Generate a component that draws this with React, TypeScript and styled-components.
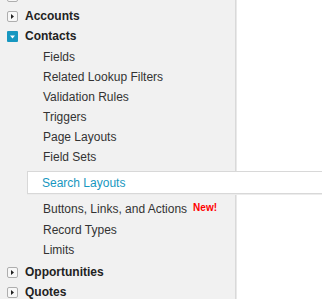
import React from 'react';
import styled, { createGlobalStyle } from 'styled-components';

const GlobalStyle = createGlobalStyle`
  html,
  body {
    margin: 0;
    height: 100%;
    overflow: hidden;
    background: #fff;
    font-family: 'Liberation Sans', Arial, sans-serif;
  }
`;

const Sidebar = styled.nav`
  display: flow-root;
  width: 235px;
  height: 100vh;
  background: #f1f1f1;
  border-right: 1px solid #d9d9d9;
  box-shadow: 1px 0 0 #e9e9e9;
`;

const Tree = styled.ul`
  list-style: none;
  margin: -14px 0 0;
  padding: 0;
`;

const Node = styled.li`
  margin: 0;
  padding: 0;
`;

const NodeHeader = styled.div`
  display: flex;
  align-items: center;
  gap: 7px;
  height: 20px;
  padding-left: 7px;
  font-size: 12px;
  font-weight: bold;
  color: #222;
  white-space: nowrap;
`;

const ToggleIcon = styled.svg`
  flex: none;
  display: block;
  width: 11px;
  height: 11px;
`;

const SubList = styled.ul`
  list-style: none;
  margin: 0;
  padding: 1px 0 2px 27px;
`;

const SubItem = styled.li<{ $selected?: boolean; $tall?: boolean }>`
  line-height: 20px;
  font-size: 12px;
  white-space: nowrap;
  color: ${(p) => (p.$selected ? '#1797c0' : '#333')};
  padding: ${(p) => (p.$selected ? '1px 0 0 14px' : `0 0 ${p.$tall ? 1 : 0}px 16px`)};
  ${(p) =>
    p.$selected &&
    `
    margin: 4px -88px 5px 0;
    background: #fff;
    border: 1px solid #d8d8d8;
    border-right: none;
    box-shadow: 0 1px 0 #ececec;
  `}
`;

const NewBadge = styled.span`
  margin-left: 6px;
  font-size: 10px;
  font-weight: bold;
  line-height: 1;
  color: #f00;
  vertical-align: 2px;
`;

const Toggle: React.FC<{ open?: boolean }> = ({ open }) =>
  open ? (
    <ToggleIcon viewBox="0 0 11 11">
      <rect x="0" y="0" width="11" height="11" rx="1" fill="#1797c0" />
      <polygon points="3,4.5 8,4.5 5.5,7.5" fill="#fff" />
    </ToggleIcon>
  ) : (
    <ToggleIcon viewBox="0 0 11 11">
      <rect x="0.5" y="0.5" width="10" height="10" rx="1.5" fill="#f7f7f7" stroke="#aeaeae" />
      <polygon points="4,3 7,5.5 4,8" fill="#222" />
    </ToggleIcon>
  );

const contactItems = [
  'Fields',
  'Related Lookup Filters',
  'Validation Rules',
  'Triggers',
  'Page Layouts',
  'Field Sets',
  'Search Layouts',
  'Buttons, Links, and Actions',
  'Record Types',
  'Limits',
];

export default function App() {
  return (
    <>
      <GlobalStyle />
      <Sidebar>
        <Tree>
          <Node>
            <NodeHeader>
              <Toggle />
              Leads
            </NodeHeader>
          </Node>
          <Node>
            <NodeHeader>
              <Toggle />
              Accounts
            </NodeHeader>
          </Node>
          <Node>
            <NodeHeader>
              <Toggle open />
              Contacts
            </NodeHeader>
            <SubList>
              {contactItems.map((item) => (
                <SubItem
                  key={item}
                  $selected={item === 'Search Layouts'}
                  $tall={item === 'Buttons, Links, and Actions'}
                >
                  {item}
                  {item === 'Buttons, Links, and Actions' && <NewBadge>New!</NewBadge>}
                </SubItem>
              ))}
            </SubList>
          </Node>
          <Node>
            <NodeHeader>
              <Toggle />
              Opportunities
            </NodeHeader>
          </Node>
          <Node>
            <NodeHeader>
              <Toggle />
              Quotes
            </NodeHeader>
          </Node>
        </Tree>
      </Sidebar>
    </>
  );
}
